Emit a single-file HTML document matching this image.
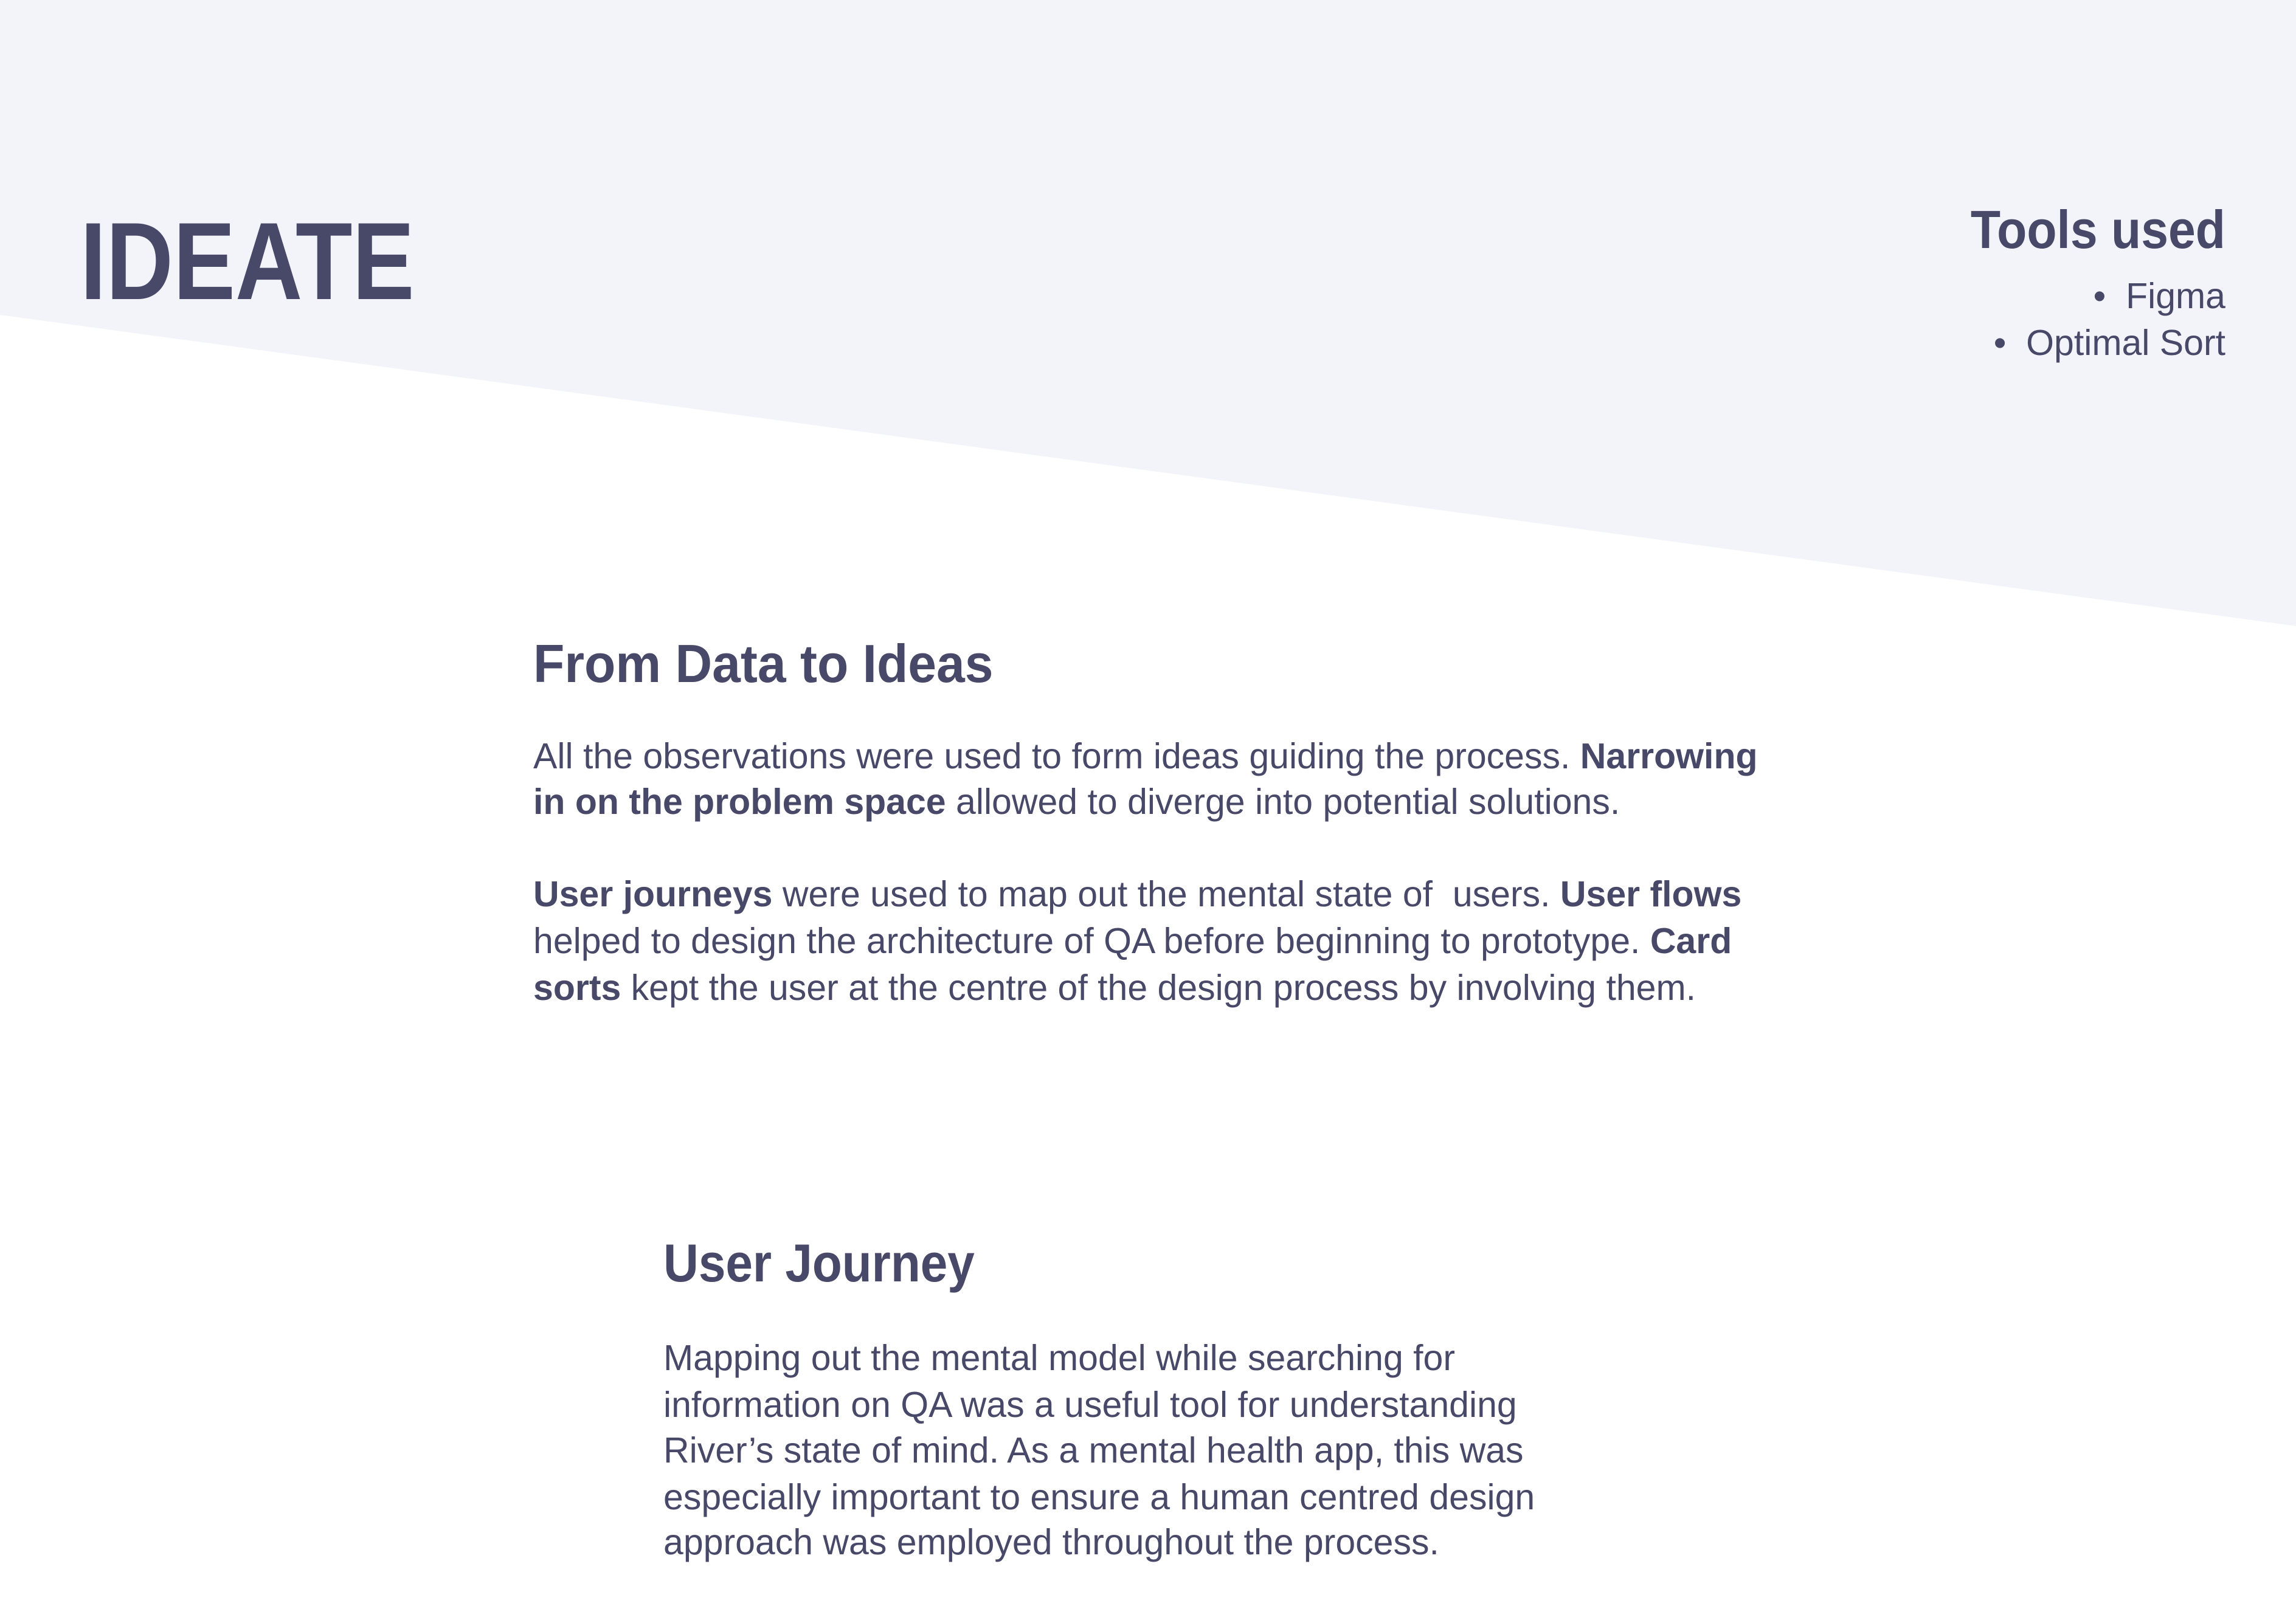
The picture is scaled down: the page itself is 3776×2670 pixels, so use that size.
<!DOCTYPE html>
<html><head><meta charset="utf-8"><style>
html,body{margin:0;padding:0;}
body{width:3776px;height:2670px;position:relative;overflow:hidden;background:#fff;font-family:"Liberation Sans",sans-serif;color:#484868;}
.l{position:absolute;white-space:nowrap;font-size:59px;line-height:76px;}
.h{position:absolute;white-space:nowrap;font-size:88px;line-height:100px;font-weight:bold;transform-origin:0 0;}
b{font-weight:bold;}
</style></head><body>
<svg style="position:absolute;left:0;top:0" width="3776" height="2670"><polygon points="0,0 3776,0 3776,1030 0,518" fill="#f3f4f9"/></svg>
<div style="position:absolute;left:132px;top:330px;font-size:181px;line-height:200px;font-weight:bold;transform-origin:0 0;transform:scaleX(0.845);white-space:nowrap">IDEATE</div>
<div class="h" style="right:116px;top:328px;transform-origin:100% 0;transform:scaleX(0.915);">Tools used</div>
<div class="l" style="right:116px;top:449px;">•&nbsp;&nbsp;Figma</div>
<div class="l" style="right:116px;top:526px;">•&nbsp;&nbsp;Optimal Sort</div>

<div class="h" style="left:877px;top:1042px;transform:scaleX(0.955);">From Data to Ideas</div>
<div class="l" style="left:877px;top:1206px;">All the observations were used to form ideas guiding the process. <b>Narrowing</b></div>
<div class="l" style="left:877px;top:1281px;"><b>in on the problem space</b> allowed to diverge into potential solutions.</div>
<div class="l" style="left:877px;top:1433px;"><b>User journeys</b> were used to map out the mental state of&nbsp; users. <b>User flows</b></div>
<div class="l" style="left:877px;top:1510px;">helped to design the architecture of QA before beginning to prototype. <b>Card</b></div>
<div class="l" style="left:877px;top:1587px;"><b>sorts</b> kept the user at the centre of the design process by involving them.</div>

<div class="h" style="left:1091px;top:2028px;transform:scaleX(0.91);">User Journey</div>
<div class="l" style="left:1091px;top:2196px;">Mapping out the mental model while searching for</div>
<div class="l" style="left:1091px;top:2273px;">information on QA was a useful tool for understanding</div>
<div class="l" style="left:1091px;top:2348px;">River’s state of mind. As a mental health app, this was</div>
<div class="l" style="left:1091px;top:2425px;">especially important to ensure a human centred design</div>
<div class="l" style="left:1091px;top:2499px;">approach was employed throughout the process.</div>
</body></html>
